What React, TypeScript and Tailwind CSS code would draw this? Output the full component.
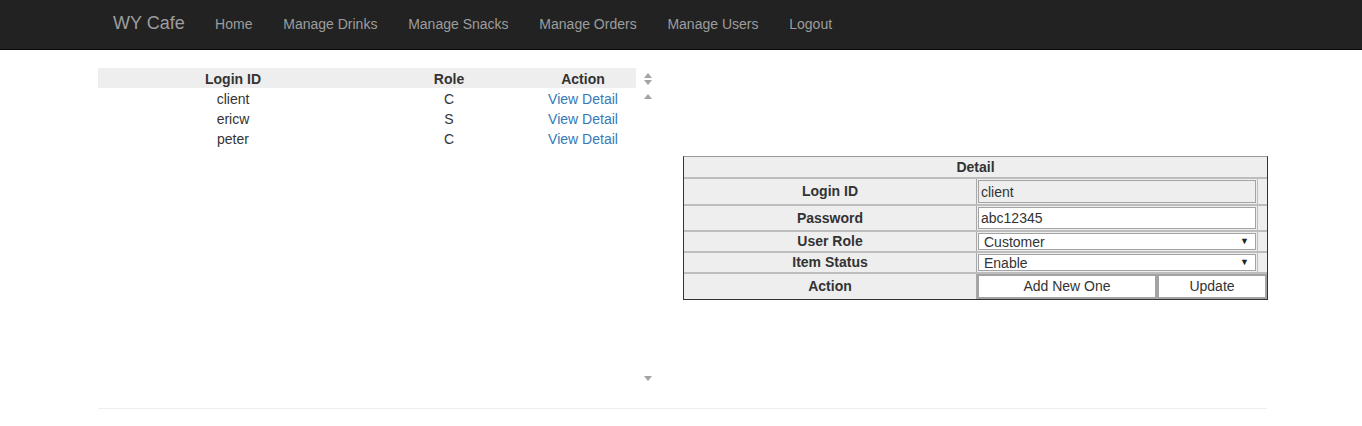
import React from "react";

const font = { fontFamily: '"Liberation Sans", Arial, sans-serif' };

function Tri({ down }: { down?: boolean }) {
  return (
    <svg width="8" height="5" viewBox="0 0 8 5" className="block">
      {down ? <path d="M0 0H8L4 5Z" fill="#a3a3a3" /> : <path d="M0 5H8L4 0Z" fill="#a3a3a3" />}
    </svg>
  );
}

const users = [
  { id: "client", role: "C" },
  { id: "ericw", role: "S" },
  { id: "peter", role: "C" },
];

function Label({ children, h }: { children: React.ReactNode; h: string }) {
  return (
    <div className={`${h} w-[293px] flex items-center justify-center font-bold text-[#333] border-r border-[#a9a9a9]`}>
      {children}
    </div>
  );
}

export default function App() {
  return (
    <div className="min-h-screen bg-white text-[14px] text-[#333]" style={font}>
      <nav className="h-[50px] bg-[#222] border-b border-[#080808]">
        <div className="w-[1170px] mx-auto px-[15px] flex items-center h-full pb-[2px]">
          <span className="text-[18px] text-[#9d9d9d] pr-[15px] pl-[2px]">WY Cafe</span>
          {["Home", "Manage Drinks", "Manage Snacks", "Manage Orders", "Manage Users", "Logout"].map((l) => (
            <a key={l} className="px-[15.4px] text-[#9d9d9d] leading-[20px]">
              {l}
            </a>
          ))}
        </div>
      </nav>

      <div className="ml-[98px] w-[1171px]">
        <div className="flex h-[358px] pt-[18px]">
          <div className="w-[585px] shrink-0 flex">
            <div className="w-[538px]">
              <div className="flex h-[20px] items-center bg-[#eee] font-bold pt-[2px]">
                <div className="w-[270px] text-center">Login ID</div>
                <div className="w-[162px] text-center">Role</div>
                <div className="w-[106px] text-center">Action</div>
              </div>
              {users.map((u) => (
                <div key={u.id} className="flex h-[20px] items-center pt-[2px]">
                  <div className="w-[270px] text-center">{u.id}</div>
                  <div className="w-[162px] text-center">{u.role}</div>
                  <div className="w-[106px] text-center text-[#337ab7]">View Detail</div>
                </div>
              ))}
            </div>
            <div className="w-[20px] h-[318px] flex flex-col items-center pl-[3px]">
              <div className="mt-[5px] flex flex-col gap-[2px]">
                <Tri />
                <Tri down />
              </div>
              <div className="mt-[9px]">
                <Tri />
              </div>
              <div className="mt-auto mb-[5px]">
                <Tri down />
              </div>
            </div>
          </div>

          <div className="w-[585px] shrink-0 mt-[88px] self-start">
            <div className="border-t border-[#9a9a9a] border-l border-r border-b border-l-[#333] border-r-[#333] border-b-[#333] bg-[#eee]">
              <div className="h-[22px] flex items-center justify-center font-bold border-b-2 border-[#bdbdbd]">
                Detail
              </div>
              <div className="flex border-b-2 border-[#bdbdbd]">
                <Label h="h-[25px]">Login ID</Label>
                <div className="w-[280px] h-[25px] p-[1px]">
                  <div className="h-full border border-[#a3a3a3] bg-[#eee] flex items-center pl-[2px] leading-none">client</div>
                </div>
                <div className="flex-1 border-l border-[#bdbdbd]" />
              </div>
              <div className="flex border-b-2 border-[#bdbdbd]">
                <Label h="h-[24px]">Password</Label>
                <div className="w-[280px] h-[24px] p-[1px]">
                  <div className="h-full border border-[#a3a3a3] bg-white flex items-center pl-[2px] leading-none">abc12345</div>
                </div>
                <div className="flex-1 border-l border-[#bdbdbd]" />
              </div>
              <div className="flex border-b-2 border-[#bdbdbd]">
                <Label h="h-[19px]">User Role</Label>
                <div className="w-[280px] h-[19px] p-[1px]">
                  <div className="h-full border border-[#a3a3a3] bg-white flex items-center pl-[5px] pr-[6px] leading-none">
                    <span className="flex-1">Customer</span>
                    <span className="text-[9px] text-[#222]">▼</span>
                  </div>
                </div>
                <div className="flex-1 border-l border-[#bdbdbd]" />
              </div>
              <div className="flex border-b-2 border-[#bdbdbd]">
                <Label h="h-[19px]">Item Status</Label>
                <div className="w-[280px] h-[19px] p-[1px]">
                  <div className="h-full border border-[#a3a3a3] bg-white flex items-center pl-[5px] pr-[6px] leading-none">
                    <span className="flex-1">Enable</span>
                    <span className="text-[9px] text-[#222]">▼</span>
                  </div>
                </div>
                <div className="flex-1 border-l border-[#bdbdbd]" />
              </div>
              <div className="flex">
                <Label h="h-[25px]">Action</Label>
                <div className="w-[180px] h-[25px] border-2 border-[#a3a3a3] bg-white flex items-center justify-center">
                  Add New One
                </div>
                <div className="flex-1 h-[25px] border-2 border-[#a3a3a3] bg-white flex items-center justify-center">
                  Update
                </div>
              </div>
            </div>
          </div>
        </div>
        <div className="border-t border-[#eee] w-[1169px]" />
      </div>
    </div>
  );
}
